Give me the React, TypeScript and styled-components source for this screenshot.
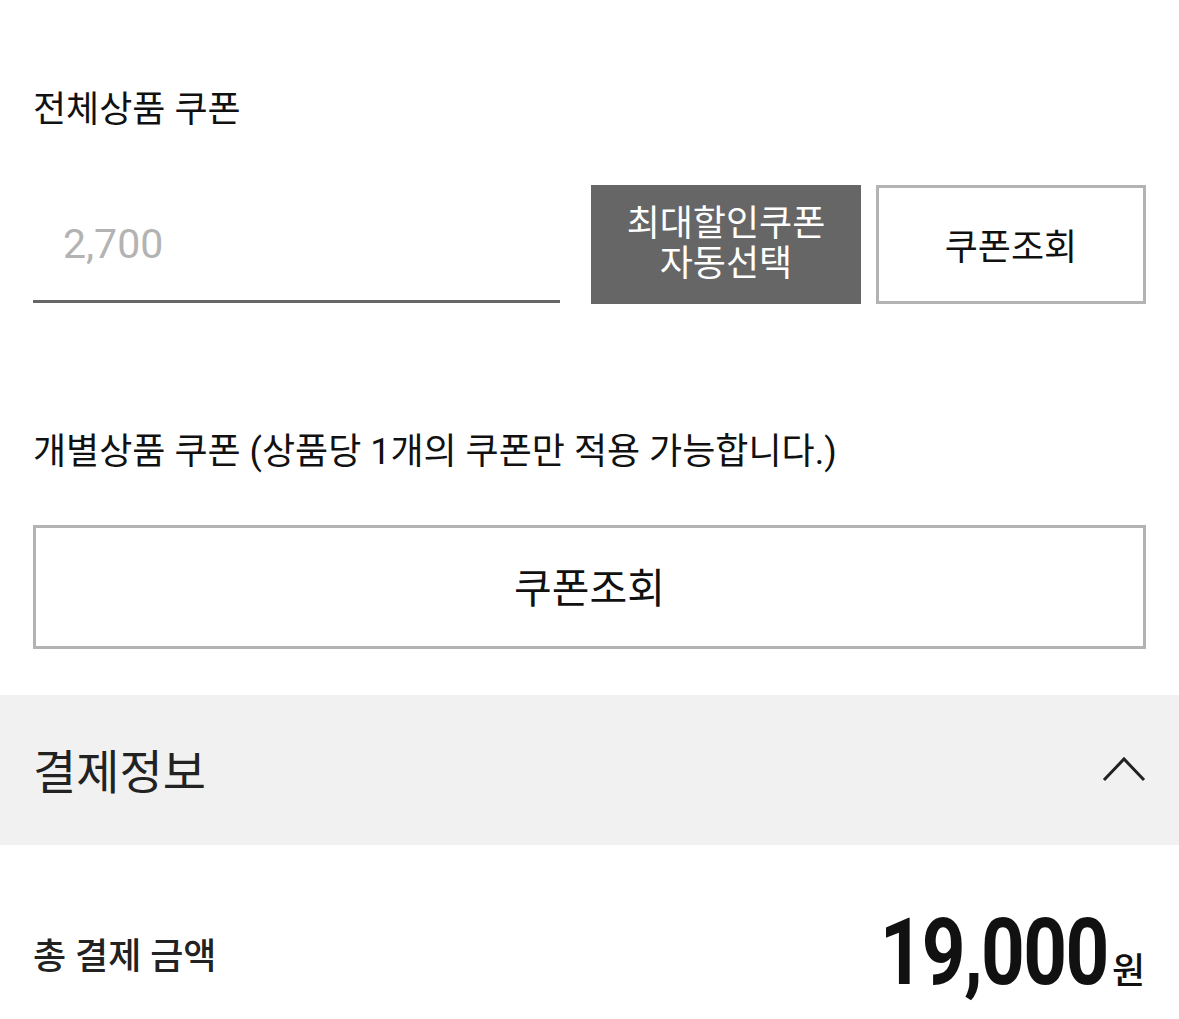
import React, { useState } from "react";
import styled, { createGlobalStyle } from "styled-components";

const GlobalStyle = createGlobalStyle`
  html, body {
    margin: 0;
    padding: 0;
    background: #fff;
  }
  body {
    font-family: Roboto, "Noto Sans CJK KR", sans-serif;
    color: #111;
  }
  * { box-sizing: border-box; }
`;

const App: React.FC = () => {
  const [amount, setAmount] = useState("");
  const [open, setOpen] = useState(true);

  return (
    <Page>
      <GlobalStyle />
      <Section>
        <SectionTitle>전체상품 쿠폰</SectionTitle>
        <CouponRow>
          <AmountInput
            type="text"
            placeholder="2,700"
            value={amount}
            onChange={(e) => setAmount(e.target.value)}
          />
          <DarkButton type="button">
            최대할인쿠폰
            <br />
            자동선택
          </DarkButton>
          <OutlineButton type="button">쿠폰조회</OutlineButton>
        </CouponRow>
      </Section>

      <Section $top={126}>
        <SectionTitle>개별상품 쿠폰 (상품당 1개의 쿠폰만 적용 가능합니다.)</SectionTitle>
        <WideButton type="button">쿠폰조회</WideButton>
      </Section>

      <AccordionHeader onClick={() => setOpen(!open)}>
        <AccordionTitle>결제정보</AccordionTitle>
        <Chevron $open={open} width="44" height="28" viewBox="0 0 44 28">
          <path d="M2 25 L22 4 L42 25" fill="none" stroke="#222" strokeWidth="3" />
        </Chevron>
      </AccordionHeader>

      <TotalRow>
        <TotalLabel>총 결제 금액</TotalLabel>
        <TotalPrice>
          <Amount>19,000</Amount>
          <Won>원</Won>
        </TotalPrice>
      </TotalRow>
    </Page>
  );
};

const Page = styled.div`
  width: 1179px;
  min-height: 1019px;
  background: #fff;
  overflow: hidden;
`;

const Section = styled.section<{ $top?: number }>`
  padding: ${(p) => p.$top ?? 88}px 33px 0 33px;
`;

const SectionTitle = styled.h2`
  margin: 0;
  font-size: 36px;
  font-weight: 400;
  line-height: 44px;
  color: #111;
`;

const CouponRow = styled.div`
  display: grid;
  grid-template-columns: 1fr 270px 270px;
  column-gap: 15px;
  margin-top: 53px;
  height: 119px;
`;

const AmountInput = styled.input`
  border: none;
  border-bottom: 3px solid #666;
  width: auto;
  min-width: 0;
  margin-right: 16px;
  align-self: end;
  height: 100px;
  margin-bottom: 1px;
  padding: 0 0 16px 30px;
  font-family: Roboto, "Noto Sans CJK KR", sans-serif;
  font-size: 41px;
  color: #333;
  background: transparent;

  &::placeholder {
    color: #b3b3b3;
  }
  &:focus {
    outline: none;
  }
`;

const DarkButton = styled.button`
  border: none;
  background: #666;
  color: #fff;
  font-family: Roboto, "Noto Sans CJK KR", sans-serif;
  font-size: 36px;
  line-height: 40px;
  padding: 0 0 1px;
  cursor: pointer;
`;

const OutlineButton = styled.button`
  border: 3px solid #b3b3b3;
  background: #fff;
  color: #111;
  font-family: Roboto, "Noto Sans CJK KR", sans-serif;
  font-size: 36px;
  padding: 0 0 2px;
  cursor: pointer;
`;

const WideButton = styled.button`
  display: block;
  width: 100%;
  height: 124px;
  margin-top: 51px;
  border: 3px solid #b3b3b3;
  background: #fff;
  color: #111;
  font-family: Roboto, "Noto Sans CJK KR", sans-serif;
  font-size: 41px;
  padding: 0 0 4px;
  cursor: pointer;
`;

const AccordionHeader = styled.div`
  margin-top: 46px;
  height: 150px;
  background: #f1f1f1;
  display: flex;
  align-items: center;
  justify-content: space-between;
  padding: 0 33px;
  cursor: pointer;
`;

const AccordionTitle = styled.h3`
  margin: 0 0 4px;
  font-size: 47px;
  font-weight: 400;
  color: #222;
`;

const Chevron = styled.svg<{ $open: boolean }>`
  transform: rotate(${(p) => (p.$open ? 0 : 180)}deg);
  margin-bottom: 2px;
`;

const TotalRow = styled.div`
  display: flex;
  align-items: center;
  justify-content: space-between;
  padding: 54px 34px 0 33px;
`;

const TotalLabel = styled.span`
  font-size: 36px;
  font-weight: 500;
  color: #222;
`;

const TotalPrice = styled.span`
  display: flex;
  align-items: baseline;
  color: #111;
`;

const Amount = styled.span`
  display: inline-block;
  font-family: Roboto, sans-serif;
  font-size: 92px;
  font-weight: 700;
  letter-spacing: -2px;
  transform: scaleX(0.83);
  transform-origin: right center;
  margin-left: -46px;
`;

const Won = styled.span`
  font-size: 36px;
  font-weight: 500;
  margin-left: 4px;
`;

export default App;
